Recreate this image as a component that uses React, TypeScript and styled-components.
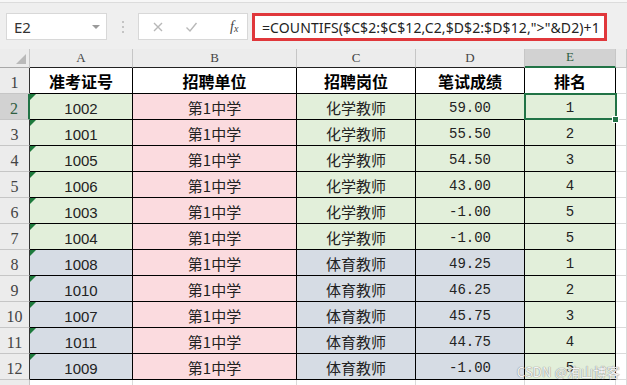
import React from 'react';
import styled, { createGlobalStyle, css } from 'styled-components';

const Global = createGlobalStyle`
  html, body { margin: 0; padding: 0; background: #fff; }
  body {
    width: 627px; height: 385px; overflow: hidden;
    font-family: "Noto Sans CJK SC", "Liberation Sans", sans-serif;
  }
`;

const Page = styled.div`
  position: relative;
  width: 627px;
  height: 385px;
  overflow: hidden;
  background: #fff;
`;

const Toolbar = styled.div`
  height: 49px;
  box-sizing: border-box;
  display: flex;
  align-items: flex-start;
  padding: 13px 0 0 6px;
  background: linear-gradient(#f7f7f7 0 2px, #dcdcdc 2px 3px, #efefef 3px);
`;

const NameBox = styled.div`
  width: 101px;
  height: 27px;
  box-sizing: border-box;
  background: #fff;
  border: 1px solid #d8d8d8;
  display: flex;
  align-items: center;
  justify-content: space-between;
  padding: 0 6px 0 7px;
  font-family: "Noto Sans", "Liberation Sans", sans-serif;
  font-size: 15px;
  color: #333;
`;

const Caret = styled.span`
  width: 0;
  height: 0;
  border-left: 4px solid transparent;
  border-right: 4px solid transparent;
  border-top: 4px solid #9a9a9a;
  margin-top: 1px;
`;

const Dots = styled.div`
  width: 31px;
  height: 27px;
  display: flex;
  flex-direction: column;
  align-items: center;
  justify-content: center;
  gap: 3px;
  & > span { width: 2px; height: 2px; background: #c4c4c4; }
`;

const FxBox = styled.div`
  width: 110px;
  height: 27px;
  box-sizing: border-box;
  background: #fff;
  border: 1px solid #d8d8d8;
  display: flex;
  align-items: center;
  padding-left: 13px;
  gap: 21px;
`;

const Fx = styled.span`
  font-family: "Liberation Serif", serif;
  font-style: italic;
  font-size: 14px;
  color: #444;
  margin-left: 11px;
  & > sub { font-size: 10px; vertical-align: -1px; }
`;

const FormulaBox = styled.div`
  margin-left: 4px;
  width: 355px;
  height: 28px;
  box-sizing: border-box;
  border: 3px solid #e0373b;
  background: #fff;
  display: flex;
  align-items: center;
  padding-left: 7px;
  font-family: "Noto Sans", "Liberation Sans", sans-serif;
  font-size: 14px;
  letter-spacing: 0.1px;
  color: #222;
  white-space: nowrap;
  overflow: hidden;
`;

const Sheet = styled.div`
  display: grid;
  grid-template-columns: 30px 103px 164px 119px 109px 91px 11px;
  grid-template-rows: 19px repeat(12, 26px) 26px;
`;

const HeadBase = css`
  box-sizing: border-box;
  background: #ececec;
  display: flex;
  justify-content: center;
  color: #444;
`;

const Corner = styled.div`
  ${HeadBase};
  position: relative;
  border-right: 1px solid #c6c6c6;
  border-bottom: 1px solid #a8a8a8;
  &::after {
    content: "";
    position: absolute;
    right: 3px;
    bottom: 3px;
    width: 0;
    height: 0;
    border-left: 10px solid transparent;
    border-bottom: 10px solid #b9b9b9;
  }
`;

const ColHead = styled.div<{ $sel?: boolean; $edge?: boolean }>`
  ${HeadBase};
  align-items: flex-end;
  padding-bottom: 1px;
  font-family: "Liberation Serif", serif;
  font-size: 13px;
  border-right: 1px solid #c6c6c6;
  border-bottom: 1px solid ${p => (p.$edge ? '#c6c6c6' : '#222')};
  ${p => p.$sel && css`
    background: #d2d2d2;
    color: #2f5f41;
    border-bottom: 2px solid #217346;
  `}
`;

const RowHead = styled.div<{ $sel?: boolean; $edge?: boolean }>`
  ${HeadBase};
  align-items: flex-end;
  font-family: "Liberation Serif", serif;
  font-size: 16px;
  line-height: 20px;
  border-bottom: 1px solid #c6c6c6;
  border-right: 1px solid ${p => (p.$edge ? '#c6c6c6' : '#333')};
  ${p => p.$sel && css`
    background: #d2d2d2;
    color: #2f5f41;
    border-right: 2px solid #217346;
  `}
`;

type Face = 'head' | 'cjk' | 'sans' | 'mono';

const faces: Record<Face, ReturnType<typeof css>> = {
  head: css`font-family: "Noto Sans CJK SC", sans-serif; font-weight: 700; font-size: 16px; color: #000;`,
  cjk: css`font-family: "Noto Sans CJK SC", sans-serif; font-size: 15px; color: #222; padding-top: 2px;`,
  sans: css`font-family: "Liberation Sans", sans-serif; font-size: 15px; color: #222; padding-top: 3px;`,
  mono: css`font-family: "Liberation Mono", monospace; font-size: 14px; color: #222; padding-top: 3px;`,
};

const Cell = styled.div<{ $bg: string; $face: Face; $flag?: boolean; $sel?: boolean }>`
  position: relative;
  box-sizing: border-box;
  background: ${p => p.$bg};
  border-right: 1px solid #000;
  border-bottom: 1px solid #000;
  display: flex;
  align-items: center;
  justify-content: center;
  white-space: nowrap;
  ${p => faces[p.$face]};
  ${p => p.$flag && css`
    &::before {
      content: "";
      position: absolute;
      left: 0;
      top: 0;
      width: 0;
      height: 0;
      border-top: 6px solid #1e7a3c;
      border-right: 6px solid transparent;
    }
  `}
  ${p => p.$sel && css`
    &::before {
      content: "";
      position: absolute;
      left: -1px;
      top: -1px;
      right: -2px;
      bottom: -1px;
      border: 2px solid #217346;
    }
    &::after {
      content: "";
      position: absolute;
      right: -4px;
      bottom: -4px;
      width: 5px;
      height: 5px;
      background: #217346;
      border: 1px solid #fff;
      z-index: 2;
    }
  `}
`;

const Blank = styled.div<{ $head?: boolean }>`
  box-sizing: border-box;
  background: ${p => (p.$head ? '#ececec' : '#fff')};
  border-bottom: 1px solid ${p => (p.$head ? '#222' : '#dadada')};
  border-right: 1px solid #dadada;
`;

const Watermark = styled.div`
  position: absolute;
  right: 7px;
  bottom: 4px;
  font-family: "Noto Sans CJK SC", "Liberation Sans", sans-serif;
  font-size: 13px;
  color: #f4f4f4;
  text-shadow: 0 0 1px #8a8a8a, 0 0 1px #8a8a8a;
  letter-spacing: 0.2px;
`;

const GREEN = '#e2efda';
const PINK = '#fbdbdf';
const BLUE = '#d6dce4';

type Row = [string, string, string, string, boolean];
const rows: Row[] = [
  ['1002', '化学教师', '59.00', '1', true],
  ['1001', '化学教师', '55.50', '2', true],
  ['1005', '化学教师', '54.50', '3', true],
  ['1006', '化学教师', '43.00', '4', true],
  ['1003', '化学教师', '-1.00', '5', true],
  ['1004', '化学教师', '-1.00', '5', true],
  ['1008', '体育教师', '49.25', '1', false],
  ['1010', '体育教师', '46.25', '2', false],
  ['1007', '体育教师', '45.75', '3', false],
  ['1011', '体育教师', '44.75', '4', false],
  ['1009', '体育教师', '-1.00', '5', false],
];

const cols = ['A', 'B', 'C', 'D', 'E'];
const heads = ['准考证号', '招聘单位', '招聘岗位', '笔试成绩', '排名'];

export default function App() {
  return (
    <Page>
      <Global />
      <Toolbar>
        <NameBox>
          <span>E2</span>
          <Caret />
        </NameBox>
        <Dots><span /><span /><span /></Dots>
        <FxBox>
          <svg width="12" height="12" viewBox="0 0 12 12">
            <path d="M2 2 L10 10 M10 2 L2 10" stroke="#b8b8b8" strokeWidth="1.4" fill="none" />
          </svg>
          <svg width="13" height="12" viewBox="0 0 13 12">
            <path d="M1.5 6.5 L5 10 L11.5 2" stroke="#b8b8b8" strokeWidth="1.4" fill="none" />
          </svg>
          <Fx>f<sub>x</sub></Fx>
        </FxBox>
        <FormulaBox>=COUNTIFS($C$2:$C$12,C2,$D$2:$D$12,"&gt;"&amp;D2)+1</FormulaBox>
      </Toolbar>
      <Sheet>
        <Corner />
        {cols.map(c => (
          <ColHead key={c} $sel={c === 'E'}>{c}</ColHead>
        ))}
        <ColHead $edge />

        <RowHead>1</RowHead>
        {heads.map(h => (
          <Cell key={h} $bg="#fff" $face="head">{h}</Cell>
        ))}
        <Blank />

        {rows.map(([id, job, score, rank, chem], i) => {
          const bg = chem ? GREEN : BLUE;
          return (
            <React.Fragment key={id}>
              <RowHead $sel={i === 0}>{i + 2}</RowHead>
              <Cell $bg={bg} $face="sans" $flag>{id}</Cell>
              <Cell $bg={PINK} $face="cjk">第1中学</Cell>
              <Cell $bg={bg} $face="cjk">{job}</Cell>
              <Cell $bg={bg} $face="mono">{score}</Cell>
              <Cell $bg={GREEN} $face="mono" $sel={i === 0}>{rank}</Cell>
              <Blank />
            </React.Fragment>
          );
        })}

        <RowHead $edge />
        <Blank /><Blank /><Blank /><Blank /><Blank /><Blank />
      </Sheet>
      <Watermark>CSDN @洧山博客</Watermark>
    </Page>
  );
}
